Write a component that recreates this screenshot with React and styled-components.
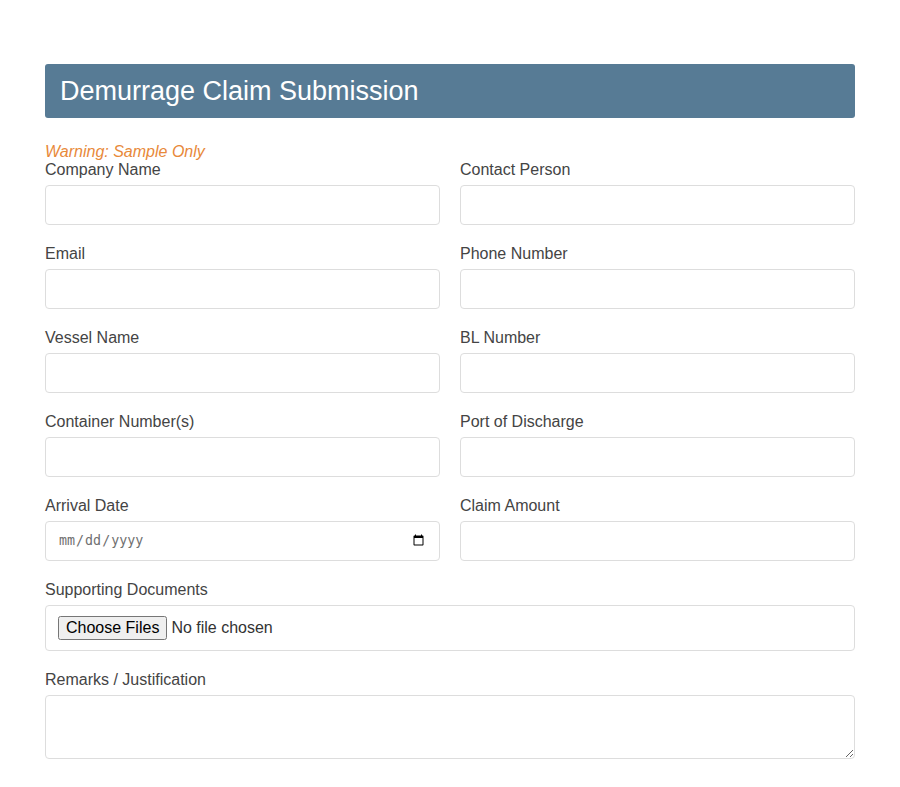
import styled, { createGlobalStyle } from "styled-components";

const GlobalStyle = createGlobalStyle`
  body {
    margin: 0;
    background: #fff;
    font-family: "Liberation Sans", Arial, sans-serif;
    color: #444;
  }
`;

const Page = styled.div`
  width: 810px;
  margin: 0 auto;
  padding: 64px 0 28px;
`;

const Header = styled.h1`
  margin: 0;
  padding: 12px 15px;
  background-color: #577b95;
  color: #fff;
  font-size: 27px;
  font-weight: normal;
  line-height: 30px;
  border-radius: 3px;
`;

const Warning = styled.p`
  margin: 25px 0 0;
  color: #e8893a;
  font-style: italic;
  font-size: 16px;
  line-height: 18px;
`;

const Form = styled.form`
  display: grid;
  grid-template-columns: 1fr 1fr;
  column-gap: 20px;
  row-gap: 20px;
`;

const Field = styled.div`
  display: flex;
  flex-direction: column;
  grid-column: ${(p) => (p.$wide ? "1 / -1" : "auto")};
`;

const Label = styled.label`
  display: block;
  font-size: 16px;
  line-height: 18px;
  margin-bottom: 6px;
  color: #444;
`;

const Input = styled.input`
  box-sizing: border-box;
  width: 100%;
  height: 40px;
  padding: 10px 12px;
  border: 1px solid #ddd;
  border-radius: 4px;
  background: #fff;
  outline: none;
  color: ${(p) => (p.type === "date" ? "#6f6f6f" : "#333")};
`;

const FileInput = styled.input`
  box-sizing: border-box;
  width: 100%;
  height: 46px;
  padding: 10px 12px;
  border: 1px solid #ddd;
  border-radius: 4px;
  background: #fff;
  font-family: "Liberation Sans", Arial, sans-serif;
  font-size: 16px;
  color: #333;
`;

const TextArea = styled.textarea`
  box-sizing: border-box;
  width: 100%;
  height: 64px;
  padding: 10px 12px;
  border: 1px solid #ddd;
  border-radius: 4px;
  background: #fff;
  outline: none;
`;

const fields = [
  ["Company Name", "text"],
  ["Contact Person", "text"],
  ["Email", "email"],
  ["Phone Number", "tel"],
  ["Vessel Name", "text"],
  ["BL Number", "text"],
  ["Container Number(s)", "text"],
  ["Port of Discharge", "text"],
  ["Arrival Date", "date"],
  ["Claim Amount", "text"],
];

export default function App() {
  return (
    <>
      <GlobalStyle />
      <Page>
        <Header>Demurrage Claim Submission</Header>
        <Warning>Warning: Sample Only</Warning>
        <Form onSubmit={(e) => e.preventDefault()}>
          {fields.map(([label, type]) => (
            <Field key={label}>
              <Label>{label}</Label>
              <Input type={type} />
            </Field>
          ))}
          <Field $wide>
            <Label>Supporting Documents</Label>
            <FileInput type="file" multiple />
          </Field>
          <Field $wide>
            <Label>Remarks / Justification</Label>
            <TextArea />
          </Field>
        </Form>
      </Page>
    </>
  );
}
